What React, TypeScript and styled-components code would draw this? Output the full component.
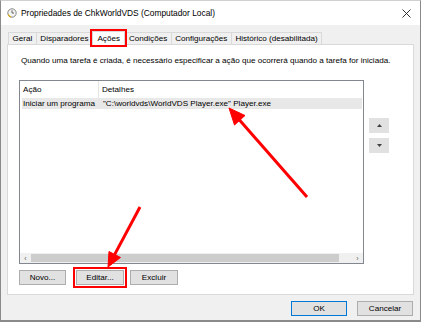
import React from 'react';
import styled, { createGlobalStyle } from 'styled-components';

const GlobalStyle = createGlobalStyle`
	html, body {
		margin: 0;
		padding: 0;
		background: #ffffff;
	}
	body {
		font-family: 'Liberation Sans', Arial, sans-serif;
		font-size: 8.1px;
		color: #000;
	}
`;

const S = {
	Window: styled.div`
		position: relative;
		width: 421px;
		height: 322px;
		box-sizing: border-box;
		border: 1px solid #8a8a8a;
		border-top-color: #d0d0d0;
		border-bottom-width: 2px;
		background: #f0f0f0;
		display: flex;
		flex-direction: column;
		overflow: hidden;
	`,

	TitleBar: styled.div`
		height: 24px;
		flex: none;
		background: #ffffff;
		display: flex;
		align-items: center;
		padding: 0 0 0 6px;
	`,

	TitleText: styled.div`
		margin-left: 4px;
		flex: 1;
		font-size: 8.4px;
	`,

	Close: styled.div`
		width: 28px;
		height: 24px;
		display: flex;
		align-items: center;
		justify-content: center;
	`,

	Body: styled.div`
		flex: 1;
		display: flex;
		flex-direction: column;
		padding: 6px 6px 0 6px;
	`,

	TabRow: styled.div`
		display: flex;
		align-items: flex-end;
		height: 13px;
		padding-left: 2px;
	`,

	Tab: styled.div<{ $active?: boolean }>`
		height: ${(p) => (p.$active ? '14px' : '12px')};
		padding: 0 ${(p) => (p.$active ? '4.5px' : '3.5px')};
		display: flex;
		align-items: center;
		box-sizing: border-box;
		background: ${(p) => (p.$active ? '#ffffff' : '#f0f0f0')};
		border: 1px solid #d9d9d9;
		border-bottom: none;
		margin-left: -1px;
		position: relative;
		z-index: ${(p) => (p.$active ? 1 : 0)};
		outline: ${(p) => (p.$active ? '2px solid #ff0000' : 'none')};
		outline-offset: 0px;
		margin-bottom: ${(p) => (p.$active ? '-1px' : '0')};
	`,

	Panel: styled.div`
		height: 251px;
		box-sizing: border-box;
		background: #ffffff;
		border: 1px solid #d9d9d9;
		padding: 0 0 0 11px;
		display: flex;
		flex-direction: column;
	`,

	Description: styled.div`
		margin-top: 10px;
		height: 11px;
		line-height: 11px;
		padding-left: 2px;
	`,

	ListArea: styled.div`
		margin-top: 14px;
		display: flex;
		align-items: flex-start;
	`,

	List: styled.div`
		width: 345px;
		height: 184px;
		box-sizing: border-box;
		border: 1px solid #828790;
		background: #ffffff;
		display: flex;
		flex-direction: column;
	`,

	Header: styled.div`
		display: grid;
		grid-template-columns: 79px 1fr;
		height: 17px;
		flex: none;
	`,

	HeaderCell: styled.div<{ $first?: boolean }>`
		display: flex;
		align-items: center;
		padding-left: 3px;
		border-right: ${(p) => (p.$first ? '1px solid #e5e5e5' : 'none')};
	`,

	Row: styled.div`
		display: grid;
		grid-template-columns: 80px 1fr;
		height: 11px;
		margin: 0 1px 0 2px;
		background: #e8e8e8;
		align-items: center;
	`,

	Cell: styled.div`
		padding-left: 1px;
		white-space: nowrap;
	`,

	ListFill: styled.div`
		flex: 1;
	`,

	HScroll: styled.div`
		height: 10px;
		flex: none;
		display: flex;
		align-items: center;
		background: #f0f0f0;
	`,

	ScrollArrow: styled.div`
		width: 11px;
		height: 10px;
		display: flex;
		align-items: center;
		justify-content: center;
		color: #606060;
		font-size: 7px;
	`,

	Thumb: styled.div`
		height: 8px;
		width: 308px;
		background: #cdcdcd;
	`,

	Track: styled.div`
		flex: 1;
	`,

	SideButtons: styled.div`
		margin-left: 5px;
		margin-top: 38px;
		display: flex;
		flex-direction: column;
		gap: 5px;
	`,

	SmallButton: styled.div`
		width: 20px;
		height: 15px;
		box-sizing: border-box;
		background: #e1e1e1;
		border: 1px solid #e1e1e1;
		display: flex;
		align-items: center;
		justify-content: center;
	`,

	ButtonRow: styled.div`
		margin-top: 6px;
		display: flex;
		gap: 6px;
	`,

	Button: styled.div<{ $width: number; $marked?: boolean; $default?: boolean }>`
		width: ${(p) => p.$width}px;
		height: 15px;
		box-sizing: border-box;
		background: #e1e1e1;
		border: 1px solid ${(p) => (p.$default ? '#0078d7' : '#adadad')};
		display: flex;
		align-items: center;
		justify-content: center;
		outline: ${(p) => (p.$marked ? '2px solid #ff0000' : 'none')};
		outline-offset: 1px;
	`,

	Footer: styled.div`
		display: flex;
		justify-content: flex-end;
		gap: 10px;
		margin-top: 6px;
		padding-right: 1px;
	`,

	Overlay: styled.svg`
		position: absolute;
		left: -1px;
		top: -1px;
		pointer-events: none;
	`,
};

const TaskIcon = () => (
	<svg width="10" height="10" viewBox="0 0 10 10">
		<circle cx="5" cy="5" r="4.2" fill="#f4f4f4" stroke="#7a7a7a" strokeWidth="0.9" />
		<path d="M5 2.3 V5 H7" fill="none" stroke="#555" strokeWidth="0.9" />
		<path d="M1.2 6.5 A4 4 0 0 0 4 9" fill="none" stroke="#d9a400" strokeWidth="1.2" />
	</svg>
);

const CloseIcon = () => (
	<svg width="9" height="9" viewBox="0 0 9 9">
		<path d="M0.5 0.5 L8.5 8.5 M8.5 0.5 L0.5 8.5" stroke="#1a1a1a" strokeWidth="0.9" />
	</svg>
);

const Triangle = ({ up }: { up?: boolean }) => (
	<svg width="5" height="3" viewBox="0 0 5 3">
		<path d={up ? 'M0 3 L2.5 0 L5 3 Z' : 'M0 0 L5 0 L2.5 3 Z'} fill="#404040" />
	</svg>
);

const tabs = ['Geral', 'Disparadores', 'Ações', 'Condições', 'Configurações', 'Histórico (desabilitada)'];

function App() {
	return (
		<>
			<GlobalStyle />
			<S.Window>
				<S.TitleBar>
					<TaskIcon />
					<S.TitleText>Propriedades de ChkWorldVDS (Computador Local)</S.TitleText>
					<S.Close>
						<CloseIcon />
					</S.Close>
				</S.TitleBar>
				<S.Body>
					<S.TabRow>
						{tabs.map((t) => (
							<S.Tab key={t} $active={t === 'Ações'}>
								{t}
							</S.Tab>
						))}
					</S.TabRow>
					<S.Panel>
						<S.Description>
							Quando uma tarefa é criada, é necessário especificar a ação que ocorrerá quando a tarefa for iniciada.
						</S.Description>
						<S.ListArea>
							<S.List>
								<S.Header>
									<S.HeaderCell $first>Ação</S.HeaderCell>
									<S.HeaderCell>Detalhes</S.HeaderCell>
								</S.Header>
								<S.Row>
									<S.Cell>Iniciar um programa</S.Cell>
									<S.Cell>"C:\worldvds\WorldVDS Player.exe" Player.exe</S.Cell>
								</S.Row>
								<S.ListFill />
								<S.HScroll>
									<S.ScrollArrow>&lsaquo;</S.ScrollArrow>
									<S.Thumb />
									<S.Track />
									<S.ScrollArrow>&rsaquo;</S.ScrollArrow>
								</S.HScroll>
							</S.List>
							<S.SideButtons>
								<S.SmallButton>
									<Triangle up />
								</S.SmallButton>
								<S.SmallButton>
									<Triangle />
								</S.SmallButton>
							</S.SideButtons>
						</S.ListArea>
						<S.ButtonRow>
							<S.Button $width={47}>Novo...</S.Button>
							<S.Button $width={48} $marked style={{ marginLeft: 4 }}>
								Editar...
							</S.Button>
							<S.Button $width={48}>Excluir</S.Button>
						</S.ButtonRow>
					</S.Panel>
					<S.Footer>
						<S.Button $width={56} $default>
							OK
						</S.Button>
						<S.Button $width={56}>Cancelar</S.Button>
					</S.Footer>
				</S.Body>
				<S.Overlay width="421" height="322" viewBox="0 0 421 322">
					<g stroke="#ff0000" strokeWidth="3" fill="#ff0000">
						<line x1="307" y1="197" x2="239.5" y2="120" />
						<polygon points="229,108 245,115.5 234.5,125" strokeWidth="1" />
						<line x1="140" y1="207" x2="114.6" y2="254.6" />
						<polygon points="108,267 120.5,257.5 109,251.5" strokeWidth="1" />
					</g>
				</S.Overlay>
			</S.Window>
		</>
	);
}

export default App;
